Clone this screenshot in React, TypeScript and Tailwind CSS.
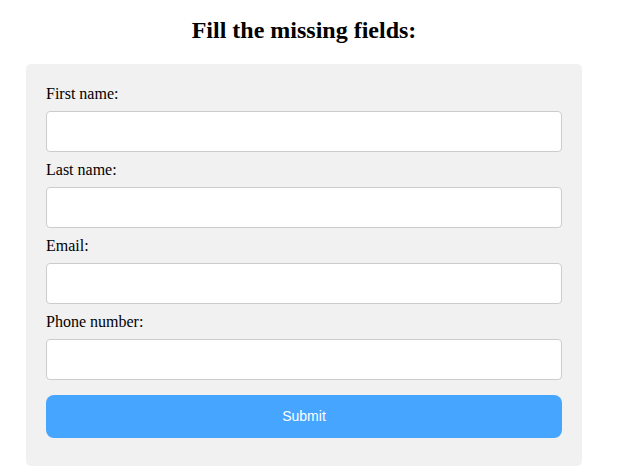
import React from "react";

const fields = ["First name:", "Last name:", "Email:", "Phone number:"];

export default function App() {
  return (
    <div className="bg-white min-h-[468px]" style={{ fontFamily: '"Liberation Serif", serif' }}>
      <div className="w-[556px] ml-[26px]">
        <h2 className="pt-[16px] mb-[20px] text-center text-[24px] leading-[28px] font-bold text-black">
          Fill the missing fields:
        </h2>
        <form className="bg-[#f1f1f1] rounded-[5px] px-[20px] pt-[21px] pb-[28px] flex flex-col">
          {fields.map((f) => (
            <div key={f} className="flex flex-col">
              <label className="text-[16px] leading-[18px] text-black">{f}</label>
              <input
                type="text"
                className="mt-[8px] mb-[9px] h-[41px] w-full bg-white border border-[#cccccc] rounded-[4px] px-[10px] outline-none"
              />
            </div>
          ))}
          <button
            type="button"
            className="mt-[6px] h-[43px] w-full rounded-[8px] bg-[#46a5ff] text-white text-[14px]"
            style={{ fontFamily: '"Liberation Sans", Arial, sans-serif' }}
          >
            Submit
          </button>
        </form>
      </div>
    </div>
  );
}
